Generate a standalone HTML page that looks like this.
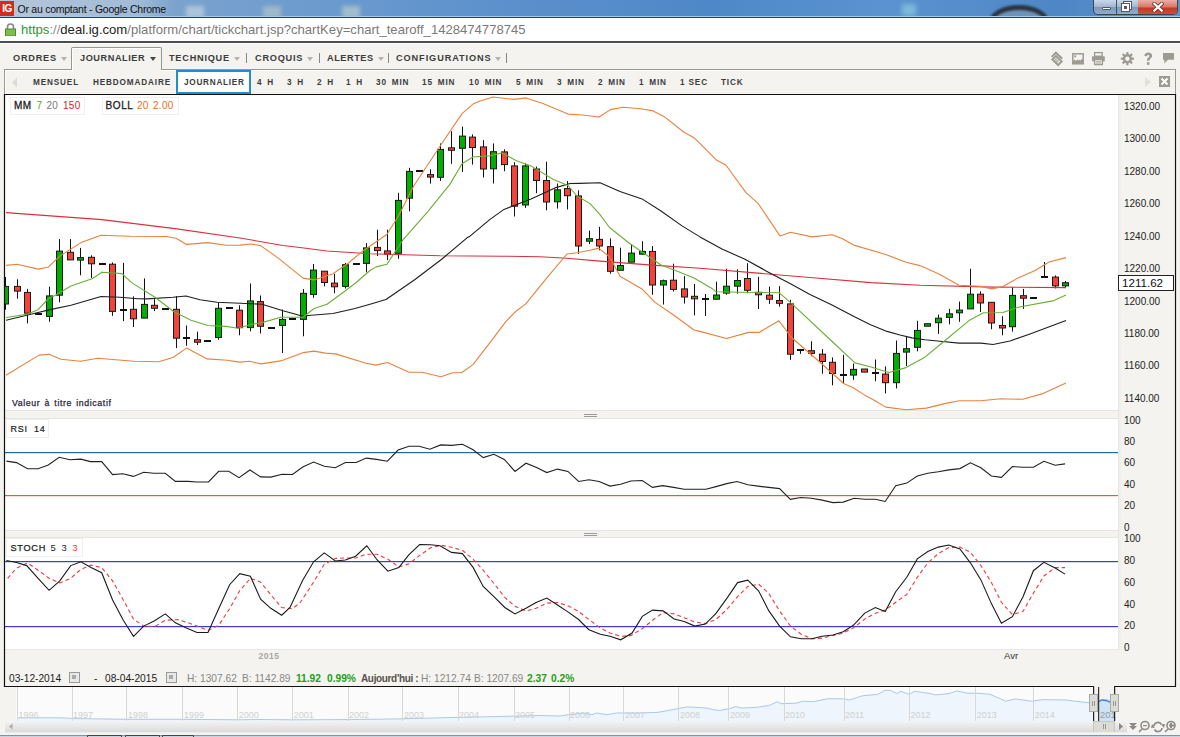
<!DOCTYPE html>
<html><head><meta charset="utf-8">
<style>
*{margin:0;padding:0;box-sizing:border-box}
html,body{width:1180px;height:737px;overflow:hidden;background:#f4f3ef;font-family:"Liberation Sans",sans-serif;position:relative}
.a{position:absolute;white-space:nowrap}
#title{left:0;top:0;width:1180px;height:18px;background:linear-gradient(90deg,#9fb6cf 0%,#7ea4cc 12%,#6e9ccf 25%,#5a8fcb 45%,#4f88c8 60%,#5a93cf 75%,#4f87c6 90%,#5d93cb 100%)}
#title .t{left:17.5px;top:3px;font-size:10.5px;color:#111;letter-spacing:-0.25px}
#logo{left:0;top:1px;width:14px;height:15px;background:#d52a22;color:#fff;font-weight:bold;font-size:10px;line-height:15px;text-align:center;letter-spacing:-0.5px}
#tline{left:0;top:16px;width:1180px;height:3px;background:linear-gradient(#a8c8ec 0,#a8c8ec 33%,#2e3d52 33%,#2e3d52 67%,#e4e6e8 67%)}
#addr{left:0;top:18px;width:1180px;height:23px;background:#fff}
#url{left:21px;top:22px;font-size:13.1px;color:#7a7a7a;letter-spacing:0}
#aline{left:0;top:41px;width:1180px;height:3px;background:linear-gradient(#4a4d52 0,#4a4d52 67%,#fdfdfc 67%)}
.tb{font-size:9.2px;font-weight:bold;color:#3c3c3c;letter-spacing:0.75px}
.arr{width:0;height:0;border-left:3px solid transparent;border-right:3px solid transparent;border-top:4px solid #b5b3ab}
.sep{width:1px;height:10px;background:#888}
.st{font-size:8.2px;font-weight:bold;color:#3c3c3c;letter-spacing:0.85px;top:78px;word-spacing:1.8px}
.ax{font-size:10px;color:#222;left:1124px}
.lbl{font-size:9.5px;font-weight:bold;color:#333;letter-spacing:0.7px}
.box{border:1px solid #f0efeb;background:#fff}
.bt{font-size:10.2px;top:672.5px}
</style></head><body>
<div id="title" class="a">
 <div class="a" style="left:186px;top:6px;width:18px;height:12px;background:#b9cde0;filter:blur(2px);opacity:.8"></div>
 <div class="a" style="left:263px;top:6px;width:18px;height:12px;background:#a9c0c8;filter:blur(2px);opacity:.8"></div>
 <div class="a" style="left:342px;top:6px;width:18px;height:12px;background:#b0c6cc;filter:blur(2px);opacity:.8"></div>
 <div class="a" style="left:902px;top:4px;width:14px;height:12px;background:#8ccbe0;filter:blur(2.5px);opacity:.7"></div>
 <div class="a" style="left:989px;top:5px;width:60px;height:34px;border-radius:50%;border:5px solid #2b3440;background:#6e93b8;filter:blur(1.2px)"></div>
 <div class="a" style="left:0;top:0;width:175px;height:17px;background:linear-gradient(90deg,rgba(200,212,226,.55),rgba(200,212,226,.45) 80%,rgba(200,212,226,0));"></div>
 <div id="logo" class="a">IG</div>
 <div class="a t">Or au comptant - Google Chrome</div>
 <div class="a" style="left:1093px;top:0;width:85px;height:15px;border:1px solid #3a4656;border-top:none;border-radius:0 0 5px 5px;background:linear-gradient(#c9d8e8,#9fb6d0 50%,#7e9ab9 52%,#90acc8);overflow:hidden">
   <div class="a" style="left:22px;top:0;width:1px;height:15px;background:#44505e"></div>
   <div class="a" style="left:44px;top:0;width:40px;height:15px;background:linear-gradient(#eab0a6,#d77868 45%,#c23a22 55%,#d05040)"></div>
   <div class="a" style="left:8px;top:7px;width:9px;height:3px;background:#fff;border:1px solid #556;border-radius:1px"></div>
   <div class="a" style="left:30px;top:2px;width:7px;height:7px;border:1.5px solid #fff;outline:1px solid #556"></div>
   <div class="a" style="left:28px;top:4px;width:7px;height:7px;border:2px solid #fff;background:#556;outline:1px solid #556"></div>
   <svg class="a" style="left:58px;top:2px" width="12" height="10"><path d="M2.3,1.8 L9.7,8.6 M9.7,1.8 L2.3,8.6" stroke="#6a3028" stroke-width="3.8" stroke-linecap="square"/><path d="M2.3,1.8 L9.7,8.6 M9.7,1.8 L2.3,8.6" stroke="#fff" stroke-width="2.2" stroke-linecap="square"/></svg>
 </div>
</div>
<div id="tline" class="a"></div>
<div id="addr" class="a"></div>
<svg class="a" style="left:5px;top:23px" width="11" height="13"><path d="M2.5,6 V4 A3,3 0 0 1 8.5,4 V6" fill="none" stroke="#888" stroke-width="1.6"/><rect x="0.5" y="6" width="10" height="7" fill="#7cc04a" stroke="#4e8a2a"/></svg>
<div id="url" class="a"><span style="color:#1e9a3a">https</span><span style="color:#8a8a8a">://</span><span style="color:#222">deal.ig.com</span>/platform/chart/tickchart.jsp?chartKey=chart_tearoff_1428474778745</div>
<div id="aline" class="a"></div>

<!-- toolbar -->
<div class="a" style="left:71px;top:47px;width:91px;height:24px;border:1px solid #949a8e;border-bottom:none;background:#f4f3ef;border-radius:2px 2px 0 0;box-shadow:inset 1px 1px 0 #fff"></div>
<div class="a" style="left:4px;top:69px;width:1172px;height:26px;border:1px solid #949a8e;border-bottom:none;background:#f4f3ef;box-shadow:inset 1px 1px 0 #fff"></div>
<div class="a" style="left:72px;top:68px;width:89px;height:3px;background:#f4f3ef;border-left:1px solid #fff"></div>
<div class="a tb" style="left:13px;top:53px">ORDRES</div><div class="a arr" style="left:61px;top:57px"></div>
<div class="a tb" style="left:80px;top:53px;letter-spacing:0.55px">JOURNALIER</div><div class="a arr" style="left:150px;top:57px;border-top-color:#444"></div>
<div class="a tb" style="left:169px;top:53px">TECHNIQUE</div><div class="a arr" style="left:234px;top:57px"></div><div class="a sep" style="left:246px;top:53px"></div>
<div class="a tb" style="left:255px;top:53px">CROQUIS</div><div class="a arr" style="left:307px;top:57px"></div><div class="a sep" style="left:319px;top:53px"></div>
<div class="a tb" style="left:327px;top:53px;letter-spacing:0.55px">ALERTES</div><div class="a arr" style="left:378px;top:57px"></div><div class="a sep" style="left:388px;top:53px"></div>
<div class="a tb" style="left:396px;top:53px;letter-spacing:0.9px">CONFIGURATIONS</div><div class="a arr" style="left:495px;top:57px"></div><div class="a sep" style="left:506px;top:53px"></div>

<!-- toolbar icons -->
<svg class="a" style="left:1040px;top:45px" width="140" height="25" viewBox="1040 45 140 25">
 <g fill="#9d9a92" stroke="none">
  <path d="M1051,56.2 L1055.9,51.3 L1062.9,58 L1061.5,59.4 L1055.9,54.1 L1052.4,57.6 Z"/>
  <path d="M1051,59.4 L1055.9,54.6 L1063,61.6 L1058.2,66.4 Z M1053.6,59.4 L1055.9,57.2 L1060.4,61.6 L1058.2,63.8 Z" fill-rule="evenodd"/>
 </g>
 <g stroke="#9d9a92" stroke-width="0.9" fill="none"><path d="M1054.6,58.2 L1059.1,62.7 M1053.6,59.4 L1058.2,63.8 M1057.3,58.1 L1054.8,60.6 M1058.8,59.6 L1056.3,62.1"/></g>
 <rect x="1072.8" y="53.8" width="10.4" height="10" fill="none" stroke="#9d9a92" stroke-width="1.5"/>
 <circle cx="1075.2" cy="56.3" r="1.1" fill="#9d9a92"/>
 <path d="M1072.8,63.8 V61.6 L1074.6,59.6 L1076,61 L1077.2,59.4 L1078.4,60.6 L1079.5,59.8 L1080.8,60.4 L1081.8,58.8 L1083.2,60 V63.8 Z" fill="#9d9a92"/>
 <rect x="1094.6" y="52.6" width="7.6" height="3.6" fill="none" stroke="#9d9a92" stroke-width="1.3"/>
 <rect x="1092" y="56.2" width="12.8" height="5.2" rx="0.8" fill="#9d9a92"/>
 <rect x="1094.6" y="59.4" width="7.8" height="5.2" fill="#f4f3ef" stroke="#9d9a92" stroke-width="1.3"/>
 <rect x="1095.8" y="60.8" width="5.4" height="0.9" fill="#9d9a92"/><rect x="1095.8" y="62.6" width="5.4" height="0.9" fill="#9d9a92"/>
 <g transform="translate(1127.4,58.7)" fill="#9d9a92">
  <circle r="4.6"/>
  <g id="tooth"><rect x="-1.1" y="-6.6" width="2.2" height="3"/></g>
  <use href="#tooth" transform="rotate(45)"/><use href="#tooth" transform="rotate(90)"/><use href="#tooth" transform="rotate(135)"/>
  <use href="#tooth" transform="rotate(180)"/><use href="#tooth" transform="rotate(225)"/><use href="#tooth" transform="rotate(270)"/><use href="#tooth" transform="rotate(315)"/>
  <circle r="2.2" fill="#f4f3ef"/>
 </g>
 <path d="M1144.4,56 C1144.4,53.6 1146.2,52.4 1148.2,52.4 C1150.6,52.4 1152.2,53.8 1152.2,55.8 C1152.2,58.2 1149.4,58.6 1149.4,60.8 H1146.9 C1146.9,57.8 1149.4,57.4 1149.4,56 C1149.4,55.2 1148.9,54.9 1148.2,54.9 C1147.4,54.9 1147,55.4 1147,56.2 Z" fill="#9d9a92"/>
 <rect x="1146.9" y="62.2" width="2.6" height="2.6" fill="#9d9a92"/>
 <path d="M1163,53.1 H1174 V59.8 H1168 L1164.3,63.4 V59.8 H1163 Z" fill="#9d9a92"/>
</svg>

<!-- sub tabs -->
<svg class="a" style="left:11px;top:77px" width="8" height="11"><polygon points="6,0.5 6,10.5 1,5.5" fill="#dcdcd6"/></svg>
<div class="a st" style="left:33px">MENSUEL</div>
<div class="a st" style="left:93px">HEBDOMADAIRE</div>
<div class="a" style="left:176px;top:70px;width:75px;height:24px;border:2px solid #1e8fd0;background:#fff"></div>
<div class="a st" style="left:184px;letter-spacing:0.75px">JOURNALIER</div>
<div class="a st" style="left:257px">4 H</div>
<div class="a st" style="left:287px">3 H</div>
<div class="a st" style="left:317px">2 H</div>
<div class="a st" style="left:346px">1 H</div>
<div class="a st" style="left:376px">30 MIN</div>
<div class="a st" style="left:422px">15 MIN</div>
<div class="a st" style="left:469px">10 MIN</div>
<div class="a st" style="left:516px">5 MIN</div>
<div class="a st" style="left:557px">3 MIN</div>
<div class="a st" style="left:598px">2 MIN</div>
<div class="a st" style="left:639px">1 MIN</div>
<div class="a st" style="left:680px;word-spacing:0">1 SEC</div>
<div class="a st" style="left:721px">TICK</div>
<svg class="a" style="left:1144px;top:76px" width="8" height="12"><polygon points="1,1 7,6 1,11" fill="#e2e1dc"/></svg>
<svg class="a" style="left:1159px;top:76px" width="11" height="11"><rect width="11" height="11" fill="#9d9b93"/><path d="M2.5,2.5 L8.5,8.5 M8.5,2.5 L2.5,8.5" stroke="#fff" stroke-width="2"/></svg>


<svg width="1180" height="737" style="position:absolute;left:0;top:0">
 <!-- panels -->
 <rect x="5" y="95" width="1113" height="315" fill="#fff"/>
 <rect x="5" y="419" width="1113" height="111" fill="#fff"/>
 <rect x="5" y="538" width="1113" height="111" fill="#fff"/>
 <!-- divider lines -->
 <rect x="5" y="410" width="1113" height="1" fill="#e4e4e2"/>
 <rect x="5" y="418" width="1113" height="1" fill="#e4e4e2"/>
 <rect x="5" y="530" width="1113" height="1" fill="#e4e4e2"/>
 <rect x="5" y="537" width="1113" height="1" fill="#e4e4e2"/>
 <rect x="1118" y="95" width="1" height="555" fill="#e6e6e4"/><rect x="1119" y="95" width="2" height="555" fill="#efefec"/><rect x="1174" y="95" width="1" height="591" fill="#fbfbf9"/>
 <rect x="5" y="649" width="1113" height="1" fill="#e8e8e6"/>
 <!-- handles -->
 <g fill="#9a9a9a">
  <rect x="584" y="414" width="13" height="1"/><rect x="584" y="416" width="13" height="1"/>
  <rect x="584" y="533" width="13" height="1"/><rect x="584" y="535" width="13" height="1"/>
 </g>
 <defs><clipPath id="cc"><rect x="5" y="95" width="1113" height="315"/></clipPath></defs>
 <g clip-path="url(#cc)"><rect x="5" y="277.0" width="1" height="32.7" fill="#111"/>
<rect x="2.5" y="286.4" width="6" height="17.6" fill="#00ad00" stroke="#1a1a1a" stroke-width="1"/>
<rect x="17" y="279.3" width="1" height="19.4" fill="#111"/>
<rect x="14.5" y="286.4" width="6" height="4.7" fill="#f2433a" stroke="#1a1a1a" stroke-width="1"/>
<rect x="27" y="288.9" width="1" height="34.5" fill="#111"/>
<rect x="24.5" y="292.4" width="6" height="20.8" fill="#f2433a" stroke="#1a1a1a" stroke-width="1"/>
<rect x="35" y="313" width="7" height="2" fill="#111"/>
<rect x="49" y="286.7" width="1" height="35.0" fill="#111"/>
<rect x="46.5" y="295.9" width="6" height="20.5" fill="#00ad00" stroke="#1a1a1a" stroke-width="1"/>
<rect x="59" y="239.1" width="1" height="63.2" fill="#111"/>
<rect x="56.5" y="251.1" width="6" height="44.1" fill="#00ad00" stroke="#1a1a1a" stroke-width="1"/>
<rect x="70" y="239.1" width="1" height="20.8" fill="#111"/>
<rect x="67.5" y="252.3" width="6" height="7.6" fill="#f2433a" stroke="#1a1a1a" stroke-width="1"/>
<rect x="80" y="247.9" width="1" height="27.4" fill="#111"/>
<rect x="77.5" y="257.6" width="6" height="2.5" fill="#00ad00" stroke="#1a1a1a" stroke-width="1"/>
<rect x="91" y="255.3" width="1" height="22.6" fill="#111"/>
<rect x="88.5" y="257.3" width="6" height="6.5" fill="#f2433a" stroke="#1a1a1a" stroke-width="1"/>
<rect x="99" y="263" width="7" height="2" fill="#111"/>
<rect x="112" y="262.4" width="1" height="53.4" fill="#111"/>
<rect x="109.5" y="264.2" width="6" height="47.2" fill="#f2433a" stroke="#1a1a1a" stroke-width="1"/>
<rect x="123" y="262.9" width="1" height="58.2" fill="#111"/>
<rect x="120" y="309" width="7" height="2" fill="#111"/>
<rect x="133" y="296.4" width="1" height="30.6" fill="#111"/>
<rect x="130.5" y="309.3" width="6" height="9.5" fill="#f2433a" stroke="#1a1a1a" stroke-width="1"/>
<rect x="144" y="278.4" width="1" height="39.7" fill="#111"/>
<rect x="141.5" y="304.4" width="6" height="13.7" fill="#00ad00" stroke="#1a1a1a" stroke-width="1"/>
<rect x="154" y="299.1" width="1" height="12.0" fill="#111"/>
<rect x="151.5" y="305.3" width="6" height="3.0" fill="#f2433a" stroke="#1a1a1a" stroke-width="1"/>
<rect x="162" y="308" width="7" height="2" fill="#111"/>
<rect x="176" y="296.1" width="1" height="52.0" fill="#111"/>
<rect x="173.5" y="309.3" width="6" height="28.9" fill="#f2433a" stroke="#1a1a1a" stroke-width="1"/>
<rect x="186" y="325.5" width="1" height="20.3" fill="#111"/>
<rect x="183" y="337" width="7" height="2" fill="#111"/>
<rect x="197" y="331.7" width="1" height="13.3" fill="#111"/>
<rect x="194.5" y="339.7" width="6" height="2.5" fill="#f2433a" stroke="#1a1a1a" stroke-width="1"/>
<rect x="204" y="340" width="7" height="2" fill="#111"/>
<rect x="218" y="302.6" width="1" height="37.1" fill="#111"/>
<rect x="215.5" y="308.3" width="6" height="29.2" fill="#00ad00" stroke="#1a1a1a" stroke-width="1"/>
<rect x="226" y="307" width="7" height="2" fill="#111"/>
<rect x="239" y="305.3" width="1" height="29.9" fill="#111"/>
<rect x="236.5" y="310.2" width="6" height="17.5" fill="#f2433a" stroke="#1a1a1a" stroke-width="1"/>
<rect x="250" y="283.5" width="1" height="47.8" fill="#111"/>
<rect x="247.5" y="300.9" width="6" height="26.7" fill="#00ad00" stroke="#1a1a1a" stroke-width="1"/>
<rect x="260" y="295.5" width="1" height="38.0" fill="#111"/>
<rect x="257.5" y="301.6" width="6" height="24.7" fill="#f2433a" stroke="#1a1a1a" stroke-width="1"/>
<rect x="268" y="327" width="7" height="2" fill="#111"/>
<rect x="282" y="309.6" width="1" height="43.4" fill="#111"/>
<rect x="279.5" y="319.4" width="6" height="6.0" fill="#00ad00" stroke="#1a1a1a" stroke-width="1"/>
<rect x="289" y="318" width="7" height="2" fill="#111"/>
<rect x="303" y="289.0" width="1" height="47.3" fill="#111"/>
<rect x="300.5" y="293.3" width="6" height="26.1" fill="#00ad00" stroke="#1a1a1a" stroke-width="1"/>
<rect x="313" y="264.0" width="1" height="33.7" fill="#111"/>
<rect x="310.5" y="270.1" width="6" height="24.3" fill="#00ad00" stroke="#1a1a1a" stroke-width="1"/>
<rect x="324" y="271.2" width="1" height="15.2" fill="#111"/>
<rect x="321.5" y="271.2" width="6" height="11.3" fill="#f2433a" stroke="#1a1a1a" stroke-width="1"/>
<rect x="334" y="273.8" width="1" height="19.5" fill="#111"/>
<rect x="331.5" y="283.1" width="6" height="3.7" fill="#f2433a" stroke="#1a1a1a" stroke-width="1"/>
<rect x="345" y="262.9" width="1" height="25.6" fill="#111"/>
<rect x="342.5" y="264.7" width="6" height="21.7" fill="#00ad00" stroke="#1a1a1a" stroke-width="1"/>
<rect x="353" y="263" width="7" height="2" fill="#111"/>
<rect x="366" y="243.0" width="1" height="29.3" fill="#111"/>
<rect x="363.5" y="247.9" width="6" height="15.5" fill="#00ad00" stroke="#1a1a1a" stroke-width="1"/>
<rect x="377" y="229.7" width="1" height="26.3" fill="#111"/>
<rect x="374.5" y="247.4" width="6" height="3.2" fill="#f2433a" stroke="#1a1a1a" stroke-width="1"/>
<rect x="387" y="229.7" width="1" height="30.4" fill="#111"/>
<rect x="384.5" y="250.9" width="6" height="3.2" fill="#f2433a" stroke="#1a1a1a" stroke-width="1"/>
<rect x="398" y="192.8" width="1" height="66.0" fill="#111"/>
<rect x="395.5" y="200.4" width="6" height="52.9" fill="#00ad00" stroke="#1a1a1a" stroke-width="1"/>
<rect x="409" y="167.8" width="1" height="43.5" fill="#111"/>
<rect x="406.5" y="171.4" width="6" height="26.8" fill="#00ad00" stroke="#1a1a1a" stroke-width="1"/>
<rect x="416" y="170" width="7" height="2" fill="#111"/>
<rect x="430" y="169.2" width="1" height="14.4" fill="#111"/>
<rect x="427.5" y="174.6" width="6" height="2.5" fill="#f2433a" stroke="#1a1a1a" stroke-width="1"/>
<rect x="440" y="143.4" width="1" height="37.5" fill="#111"/>
<rect x="437.5" y="149.4" width="6" height="27.9" fill="#00ad00" stroke="#1a1a1a" stroke-width="1"/>
<rect x="451" y="131.2" width="1" height="32.6" fill="#111"/>
<rect x="448.5" y="147.8" width="6" height="2.5" fill="#f2433a" stroke="#1a1a1a" stroke-width="1"/>
<rect x="462" y="126.6" width="1" height="45.3" fill="#111"/>
<rect x="459.5" y="136.1" width="6" height="12.2" fill="#00ad00" stroke="#1a1a1a" stroke-width="1"/>
<rect x="472" y="134.4" width="1" height="30.2" fill="#111"/>
<rect x="469.5" y="137.1" width="6" height="10.4" fill="#f2433a" stroke="#1a1a1a" stroke-width="1"/>
<rect x="483" y="140.2" width="1" height="37.3" fill="#111"/>
<rect x="480.5" y="146.9" width="6" height="22.1" fill="#f2433a" stroke="#1a1a1a" stroke-width="1"/>
<rect x="493" y="143.4" width="1" height="40.1" fill="#111"/>
<rect x="490.5" y="151.7" width="6" height="17.1" fill="#00ad00" stroke="#1a1a1a" stroke-width="1"/>
<rect x="504" y="149.3" width="1" height="21.9" fill="#111"/>
<rect x="501.5" y="151.9" width="6" height="12.7" fill="#f2433a" stroke="#1a1a1a" stroke-width="1"/>
<rect x="514" y="162.2" width="1" height="54.3" fill="#111"/>
<rect x="511.5" y="165.9" width="6" height="40.3" fill="#f2433a" stroke="#1a1a1a" stroke-width="1"/>
<rect x="525" y="163.4" width="1" height="44.5" fill="#111"/>
<rect x="522.5" y="165.9" width="6" height="39.1" fill="#00ad00" stroke="#1a1a1a" stroke-width="1"/>
<rect x="536" y="166.6" width="1" height="26.6" fill="#111"/>
<rect x="533.5" y="169.0" width="6" height="11.5" fill="#f2433a" stroke="#1a1a1a" stroke-width="1"/>
<rect x="546" y="161.7" width="1" height="48.6" fill="#111"/>
<rect x="543.5" y="180.5" width="6" height="21.5" fill="#f2433a" stroke="#1a1a1a" stroke-width="1"/>
<rect x="557" y="183.5" width="1" height="25.1" fill="#111"/>
<rect x="554.5" y="189.8" width="6" height="12.0" fill="#00ad00" stroke="#1a1a1a" stroke-width="1"/>
<rect x="567" y="181.0" width="1" height="28.4" fill="#111"/>
<rect x="564.5" y="188.6" width="6" height="7.1" fill="#f2433a" stroke="#1a1a1a" stroke-width="1"/>
<rect x="578" y="190.3" width="1" height="63.5" fill="#111"/>
<rect x="575.5" y="195.9" width="6" height="50.1" fill="#f2433a" stroke="#1a1a1a" stroke-width="1"/>
<rect x="589" y="230.6" width="1" height="13.4" fill="#111"/>
<rect x="586.5" y="238.7" width="6" height="2.5" fill="#00ad00" stroke="#1a1a1a" stroke-width="1"/>
<rect x="599" y="226.9" width="1" height="23.4" fill="#111"/>
<rect x="596.5" y="239.4" width="6" height="6.6" fill="#f2433a" stroke="#1a1a1a" stroke-width="1"/>
<rect x="610" y="238.4" width="1" height="35.3" fill="#111"/>
<rect x="607.5" y="246.6" width="6" height="24.7" fill="#f2433a" stroke="#1a1a1a" stroke-width="1"/>
<rect x="620" y="247.7" width="1" height="22.6" fill="#111"/>
<rect x="617.5" y="265.5" width="6" height="4.8" fill="#00ad00" stroke="#1a1a1a" stroke-width="1"/>
<rect x="631" y="244.2" width="1" height="18.0" fill="#111"/>
<rect x="628.5" y="253.1" width="6" height="9.1" fill="#00ad00" stroke="#1a1a1a" stroke-width="1"/>
<rect x="642" y="241.2" width="1" height="13.4" fill="#111"/>
<rect x="639.5" y="251.4" width="6" height="2.8" fill="#00ad00" stroke="#1a1a1a" stroke-width="1"/>
<rect x="652" y="246.0" width="1" height="48.8" fill="#111"/>
<rect x="649.5" y="251.4" width="6" height="33.6" fill="#f2433a" stroke="#1a1a1a" stroke-width="1"/>
<rect x="663" y="279.6" width="1" height="24.9" fill="#111"/>
<rect x="660.5" y="280.7" width="6" height="4.3" fill="#00ad00" stroke="#1a1a1a" stroke-width="1"/>
<rect x="673" y="263.7" width="1" height="27.8" fill="#111"/>
<rect x="670.5" y="280.2" width="6" height="9.2" fill="#f2433a" stroke="#1a1a1a" stroke-width="1"/>
<rect x="684" y="275.9" width="1" height="27.6" fill="#111"/>
<rect x="681.5" y="288.9" width="6" height="8.1" fill="#f2433a" stroke="#1a1a1a" stroke-width="1"/>
<rect x="694" y="283.9" width="1" height="31.5" fill="#111"/>
<rect x="691.5" y="296.3" width="6" height="2.5" fill="#f2433a" stroke="#1a1a1a" stroke-width="1"/>
<rect x="705" y="294.0" width="1" height="22.0" fill="#111"/>
<rect x="702" y="298" width="7" height="2" fill="#111"/>
<rect x="716" y="281.6" width="1" height="17.6" fill="#111"/>
<rect x="713.5" y="295.0" width="6" height="4.2" fill="#00ad00" stroke="#1a1a1a" stroke-width="1"/>
<rect x="726" y="268.7" width="1" height="26.1" fill="#111"/>
<rect x="723.5" y="286.2" width="6" height="6.9" fill="#00ad00" stroke="#1a1a1a" stroke-width="1"/>
<rect x="737" y="269.3" width="1" height="24.4" fill="#111"/>
<rect x="734.5" y="280.5" width="6" height="5.7" fill="#00ad00" stroke="#1a1a1a" stroke-width="1"/>
<rect x="747" y="263.2" width="1" height="29.9" fill="#111"/>
<rect x="744.5" y="278.5" width="6" height="11.8" fill="#f2433a" stroke="#1a1a1a" stroke-width="1"/>
<rect x="758" y="276.9" width="1" height="32.1" fill="#111"/>
<rect x="755.5" y="292.3" width="6" height="2.5" fill="#f2433a" stroke="#1a1a1a" stroke-width="1"/>
<rect x="769" y="286.6" width="1" height="17.3" fill="#111"/>
<rect x="766.5" y="295.2" width="6" height="4.0" fill="#f2433a" stroke="#1a1a1a" stroke-width="1"/>
<rect x="779" y="286.2" width="1" height="20.4" fill="#111"/>
<rect x="776.5" y="300.5" width="6" height="2.8" fill="#f2433a" stroke="#1a1a1a" stroke-width="1"/>
<rect x="790" y="299.8" width="1" height="60.1" fill="#111"/>
<rect x="787.5" y="303.9" width="6" height="50.3" fill="#f2433a" stroke="#1a1a1a" stroke-width="1"/>
<rect x="800" y="350.0" width="1" height="3.8" fill="#111"/>
<rect x="797" y="349" width="7" height="2" fill="#111"/>
<rect x="811" y="341.2" width="1" height="15.0" fill="#111"/>
<rect x="808.5" y="350.7" width="6" height="2.7" fill="#f2433a" stroke="#1a1a1a" stroke-width="1"/>
<rect x="822" y="349.1" width="1" height="24.6" fill="#111"/>
<rect x="819.5" y="354.2" width="6" height="7.3" fill="#f2433a" stroke="#1a1a1a" stroke-width="1"/>
<rect x="832" y="357.4" width="1" height="27.9" fill="#111"/>
<rect x="829.5" y="362.3" width="6" height="11.2" fill="#f2433a" stroke="#1a1a1a" stroke-width="1"/>
<rect x="843" y="354.8" width="1" height="29.1" fill="#111"/>
<rect x="840" y="374" width="7" height="2" fill="#111"/>
<rect x="853" y="363.5" width="1" height="16.3" fill="#111"/>
<rect x="850.5" y="369.4" width="6" height="5.7" fill="#00ad00" stroke="#1a1a1a" stroke-width="1"/>
<rect x="864" y="369.0" width="1" height="3.1" fill="#111"/>
<rect x="861.5" y="369.0" width="6" height="3.1" fill="#f2433a" stroke="#1a1a1a" stroke-width="1"/>
<rect x="875" y="359.5" width="1" height="21.7" fill="#111"/>
<rect x="872" y="372" width="7" height="2" fill="#111"/>
<rect x="885" y="366.4" width="1" height="27.0" fill="#111"/>
<rect x="882.5" y="374.1" width="6" height="8.6" fill="#f2433a" stroke="#1a1a1a" stroke-width="1"/>
<rect x="896" y="340.5" width="1" height="47.9" fill="#111"/>
<rect x="893.5" y="353.4" width="6" height="29.3" fill="#00ad00" stroke="#1a1a1a" stroke-width="1"/>
<rect x="906" y="336.5" width="1" height="29.5" fill="#111"/>
<rect x="903.5" y="348.7" width="6" height="3.4" fill="#00ad00" stroke="#1a1a1a" stroke-width="1"/>
<rect x="917" y="320.8" width="1" height="30.5" fill="#111"/>
<rect x="914.5" y="330.4" width="6" height="16.9" fill="#00ad00" stroke="#1a1a1a" stroke-width="1"/>
<rect x="927" y="323.7" width="1" height="2.4" fill="#111"/>
<rect x="924.5" y="323.7" width="6" height="2.5" fill="#00ad00" stroke="#1a1a1a" stroke-width="1"/>
<rect x="938" y="314.6" width="1" height="19.3" fill="#111"/>
<rect x="935.5" y="318.2" width="6" height="4.5" fill="#00ad00" stroke="#1a1a1a" stroke-width="1"/>
<rect x="949" y="308.9" width="1" height="15.4" fill="#111"/>
<rect x="946.5" y="313.8" width="6" height="3.6" fill="#00ad00" stroke="#1a1a1a" stroke-width="1"/>
<rect x="959" y="301.6" width="1" height="20.2" fill="#111"/>
<rect x="956.5" y="310.1" width="6" height="2.7" fill="#00ad00" stroke="#1a1a1a" stroke-width="1"/>
<rect x="970" y="268.8" width="1" height="40.1" fill="#111"/>
<rect x="967.5" y="294.2" width="6" height="14.7" fill="#00ad00" stroke="#1a1a1a" stroke-width="1"/>
<rect x="980" y="291.3" width="1" height="20.8" fill="#111"/>
<rect x="977.5" y="294.2" width="6" height="8.8" fill="#f2433a" stroke="#1a1a1a" stroke-width="1"/>
<rect x="991" y="302.3" width="1" height="26.9" fill="#111"/>
<rect x="988.5" y="302.3" width="6" height="20.7" fill="#f2433a" stroke="#1a1a1a" stroke-width="1"/>
<rect x="1002" y="316.2" width="1" height="19.1" fill="#111"/>
<rect x="999.5" y="325.5" width="6" height="2.5" fill="#f2433a" stroke="#1a1a1a" stroke-width="1"/>
<rect x="1012" y="287.1" width="1" height="44.5" fill="#111"/>
<rect x="1009.5" y="295.4" width="6" height="31.3" fill="#00ad00" stroke="#1a1a1a" stroke-width="1"/>
<rect x="1023" y="288.9" width="1" height="20.0" fill="#111"/>
<rect x="1020.5" y="295.7" width="6" height="2.5" fill="#f2433a" stroke="#1a1a1a" stroke-width="1"/>
<rect x="1030" y="297" width="7" height="2" fill="#111"/>
<rect x="1044" y="262.0" width="1" height="14.6" fill="#111"/>
<rect x="1041" y="276" width="7" height="2" fill="#111"/>
<rect x="1055" y="275.4" width="1" height="13.0" fill="#111"/>
<rect x="1052.5" y="277.1" width="6" height="8.8" fill="#f2433a" stroke="#1a1a1a" stroke-width="1"/>
<rect x="1065" y="281.0" width="1" height="6.6" fill="#111"/>
<rect x="1062.5" y="282.7" width="6" height="3.2" fill="#00ad00" stroke="#1a1a1a" stroke-width="1"/></g>
 <!-- lines main -->
 <g fill="none" stroke-width="1.1" stroke-linejoin="round">
  <polyline points="6.0,212.6 102.0,219.6 175.0,228.6 240.0,238.0 283.0,245.5 300.0,247.5 327.0,251.0 370.0,253.8 440.0,255.8 503.0,256.2 540.0,256.7 567.0,258.3 600.0,261.1 652.0,265.1 700.0,268.3 761.0,273.4 810.0,277.5 871.0,282.6 920.0,285.2 993.0,287.1 1066.0,287.6" stroke="#d9303c"/>
  <polyline points="6.0,265.4 17.0,264.2 38.0,269.1 48.0,267.3 60.0,255.9 81.0,242.6 101.0,235.2 130.0,236.2 166.0,236.5 176.0,238.2 186.7,244.4 208.0,242.6 226.0,245.3 240.0,245.1 251.0,244.0 260.6,245.6 279.0,258.6 303.0,278.1 313.8,279.9 333.0,273.8 348.5,263.0 361.5,252.0 387.0,234.3 398.0,216.7 414.0,185.5 441.0,144.8 462.0,113.6 473.0,104.1 480.0,101.1 493.0,97.0 514.0,99.4 526.0,97.9 543.0,103.6 568.0,114.1 580.0,114.8 599.0,117.0 610.5,109.6 622.7,107.2 641.0,108.7 653.0,110.9 664.0,116.4 684.0,132.2 694.0,137.7 716.0,159.7 726.0,165.2 746.0,192.6 758.0,203.3 780.0,235.9 790.5,232.3 812.0,236.9 832.0,234.7 842.0,238.4 854.6,245.4 885.0,254.2 906.0,262.2 920.0,265.6 939.5,274.2 959.0,285.2 981.0,286.4 992.0,288.9 1003.0,286.4 1018.0,277.9 1035.0,270.5 1049.0,262.0 1066.0,257.6" stroke="#e8823c"/>
  <polyline points="6.0,375.3 39.0,355.1 49.0,354.3 61.0,359.2 80.6,361.2 97.7,358.2 134.0,361.2 158.7,361.7 173.0,357.5 186.5,348.1 207.3,358.9 227.4,360.3 239.3,362.1 250.0,361.3 260.7,363.9 280.8,360.9 303.4,352.6 314.0,351.1 325.4,353.1 335.6,353.9 366.0,363.3 376.0,365.1 387.7,362.5 409.0,372.2 422.0,372.2 441.0,376.8 452.5,372.7 461.5,372.7 473.0,364.6 490.7,341.7 506.0,321.4 516.0,311.2 526.0,303.6 546.6,278.1 567.0,254.0 577.0,252.7 590.0,250.3 598.7,248.1 609.5,256.8 620.0,276.3 642.0,288.9 655.0,302.4 672.5,314.3 694.0,330.0 700.0,331.4 726.4,338.5 748.8,332.4 759.0,332.4 779.0,320.8 791.5,337.5 822.0,364.0 843.6,383.5 853.2,387.8 864.4,394.9 874.6,400.5 885.8,407.1 906.1,409.7 926.4,408.1 946.8,403.1 959.0,400.7 981.0,400.7 1000.6,398.8 1022.6,399.3 1042.0,393.9 1066.0,382.9" stroke="#e8823c"/>
  <polyline points="6.0,320.2 35.0,313.2 49.0,309.9 71.0,305.3 101.0,296.5 120.0,297.3 138.0,298.7 147.0,298.9 173.0,297.3 186.0,296.0 200.0,299.8 217.0,302.3 240.0,303.2 262.0,304.2 283.0,310.7 302.0,316.0 333.0,313.5 355.0,308.5 370.0,304.2 386.0,299.5 415.0,279.5 442.0,259.0 467.0,237.8 470.0,236.2 490.0,219.4 504.0,209.4 531.0,198.9 555.0,187.9 570.0,183.5 579.0,183.4 600.0,182.8 620.0,191.4 642.0,198.9 661.0,211.0 682.0,225.9 700.0,236.9 722.0,249.0 745.0,259.3 767.0,271.4 790.0,283.5 810.0,294.4 830.0,303.9 855.0,317.1 870.0,324.5 887.0,331.4 900.0,335.0 912.0,337.9 925.0,339.8 940.0,341.2 959.0,343.1 981.0,343.1 993.0,344.5 1010.0,341.0 1030.0,334.0 1066.0,320.6" stroke="#1e1e1e"/>
  <polyline points="6.0,317.5 27.0,314.2 38.0,309.7 49.0,298.0 53.0,296.4 71.0,286.0 92.0,278.8 102.0,272.2 122.0,273.6 130.0,281.1 134.0,284.1 155.0,297.3 174.0,311.8 191.0,320.3 208.0,325.5 226.0,326.4 238.0,328.2 250.0,324.7 262.0,322.6 281.0,317.2 303.0,317.2 314.0,308.5 327.0,304.2 342.0,293.3 355.0,283.5 370.0,270.5 376.0,266.9 387.0,264.2 403.0,239.8 428.0,211.3 450.0,184.1 462.0,163.8 473.0,157.0 485.0,156.1 490.0,155.8 502.0,152.9 516.0,160.5 531.0,165.9 553.0,179.3 568.0,185.5 577.0,196.0 590.0,203.6 600.0,214.7 609.5,227.5 629.0,243.0 645.0,254.0 661.0,265.0 678.0,271.6 694.0,278.0 712.0,288.4 716.0,291.8 741.0,292.3 779.0,292.7 792.0,303.9 830.0,339.5 855.0,362.9 871.0,367.0 889.0,372.5 906.0,367.6 924.0,357.8 942.0,343.0 969.0,320.6 983.5,312.8 1003.0,312.5 1018.0,307.2 1054.0,300.6 1066.0,295.0" stroke="#6aae36"/>
 </g>

 <!-- RSI -->
 <rect x="5" y="452" width="1113" height="1.2" fill="#1f6d96"/>
 <rect x="5" y="495" width="1113" height="1.2" fill="#f05050"/>
 <polyline points="6.4,461.1 16.5,462.6 27.5,468.7 38.1,468.7 48.3,464.9 59.2,457.3 69.9,459.8 80.9,459.1 90.3,461.6 101.7,461.6 112.6,474.6 122.8,473.8 133.5,476.4 143.7,472.3 153.8,473.3 165.3,473.3 175.4,481.4 188.2,481.4 197.0,482.0 208.5,482.0 218.7,471.3 228.8,471.3 239.0,477.6 249.9,470.0 260.6,476.9 270.8,477.1 282.2,474.3 292.5,474.5 302.7,467.0 313.6,462.0 324.3,466.3 335.3,467.8 345.4,462.5 356.1,462.5 366.3,458.1 376.4,459.4 387.4,461.2 398.1,450.0 409.0,446.2 419.2,446.2 429.8,449.2 440.8,444.9 451.5,445.4 462.4,444.2 473.1,449.7 483.2,457.6 493.9,454.3 504.3,459.4 515.0,471.4 526.0,463.2 536.6,467.5 546.8,472.6 557.5,469.1 567.9,471.4 578.6,481.5 588.9,479.8 599.1,481.5 610.0,486.1 620.7,484.3 630.9,481.0 642.3,480.5 652.5,487.4 662.6,485.6 673.6,487.4 684.2,489.2 695.2,489.2 705.9,489.2 716.0,486.6 726.7,483.6 737.1,481.5 747.8,484.8 758.0,486.1 768.7,487.4 779.6,488.6 790.3,499.3 800.7,497.5 811.4,498.3 822.1,500.1 833.0,502.6 843.2,502.1 854.1,498.3 864.8,499.3 875.3,499.3 885.2,501.5 895.7,485.7 906.8,483.1 917.3,476.0 927.8,473.3 938.3,471.8 948.8,469.9 959.9,468.6 970.4,462.8 980.9,467.8 991.4,476.0 1001.4,477.3 1012.4,466.5 1022.9,467.3 1033.4,467.3 1043.9,461.3 1055.2,465.2 1065.0,463.9" fill="none" stroke="#222" stroke-width="1.1"/>
 <!-- STOCH -->
 <rect x="5" y="561" width="1113" height="1.2" fill="#3b3bdc"/>
 <rect x="5" y="626" width="1113" height="1.2" fill="#3b3bdc"/>
 <polyline points="7.6,578.3 16.5,568.1 27.5,563.0 38.1,570.2 49.1,578.3 59.8,582.9 70.7,578.3 80.9,569.4 91.0,565.1 101.7,567.6 112.6,580.9 123.3,599.9 133.5,619.0 143.7,626.1 154.6,626.6 165.3,620.3 178.0,619.5 188.2,622.8 197.0,626.1 208.0,630.4 218.7,625.3 229.6,608.8 239.8,590.5 250.4,578.3 260.6,582.1 270.8,594.8 281.7,607.5 292.4,608.8 300.2,602.5 313.6,582.1 324.3,564.3 335.3,558.5 345.4,558.0 355.6,558.0 366.3,554.2 377.2,554.2 387.9,559.2 398.8,566.9 409.0,563.8 419.7,555.4 430.6,547.8 441.3,545.3 451.5,547.3 462.4,550.3 473.1,559.2 483.2,570.2 493.9,583.4 504.8,597.4 515.0,606.3 526.0,610.9 536.1,608.3 546.8,603.2 557.5,602.5 567.9,605.8 578.6,611.4 588.9,619.5 600.3,627.9 610.0,633.0 620.7,636.3 630.9,635.5 642.3,628.7 652.5,620.3 663.1,612.6 674.1,613.9 684.2,617.7 694.9,622.0 705.3,623.6 716.0,619.5 727.0,609.3 737.6,596.6 747.8,586.4 758.7,584.2 768.9,593.6 779.6,610.9 790.5,626.1 801.2,634.2 811.9,638.8 822.1,638.1 833.0,635.5 843.2,633.0 853.3,627.9 864.8,619.0 874.9,613.4 885.2,610.1 895.7,602.3 906.8,594.4 917.3,577.3 927.8,562.8 938.3,553.6 948.8,547.6 959.9,547.1 970.4,552.3 980.9,565.5 991.4,582.5 1001.4,602.3 1012.4,614.6 1022.9,611.5 1033.4,593.1 1043.9,576.0 1055.2,567.6 1065.0,567.6" fill="none" stroke="#f03a3a" stroke-width="1.1" stroke-dasharray="4,3"/>
 <polyline points="6.4,560.5 16.5,562.5 26.7,565.6 38.1,578.3 49.1,590.3 59.8,580.9 70.7,565.6 80.9,561.8 91.0,567.6 101.7,572.7 112.6,599.9 123.3,620.3 133.5,636.3 143.7,626.1 154.6,620.8 165.3,613.9 175.4,622.8 186.4,627.9 197.0,632.5 208.0,632.5 218.7,608.8 229.6,584.7 239.8,573.7 250.4,576.3 260.6,599.2 270.8,608.3 281.7,615.2 290.0,607.5 302.7,580.3 313.6,561.8 324.3,552.9 335.3,561.0 345.4,560.0 355.6,556.2 366.8,545.8 377.2,560.0 387.9,571.2 398.8,567.6 409.0,554.7 419.7,544.5 430.6,544.7 440.0,545.8 451.5,552.4 462.4,553.6 473.1,567.4 483.2,586.4 493.9,596.6 504.8,607.5 515.0,613.9 526.0,608.3 536.1,602.5 546.8,598.1 557.5,605.0 567.9,611.9 578.6,619.5 588.9,629.7 600.3,634.2 610.0,636.3 620.7,639.8 632.1,633.0 642.3,616.4 652.5,610.1 663.1,610.9 674.1,619.0 684.2,621.5 694.9,626.1 705.3,624.1 716.0,613.4 727.0,598.1 737.6,582.6 747.8,580.1 758.7,591.0 768.9,610.9 779.6,626.1 790.5,636.8 801.2,638.8 811.9,638.8 822.1,636.3 833.0,635.0 843.2,631.7 853.3,625.3 864.8,613.1 875.3,607.5 885.2,611.5 895.7,591.7 906.8,577.3 917.3,558.9 927.8,551.5 938.3,547.1 948.8,545.0 959.9,548.9 970.4,562.8 980.9,579.9 991.4,603.6 1001.4,623.3 1012.4,616.7 1022.9,597.0 1033.4,570.7 1043.9,562.3 1055.2,568.1 1065.0,574.1" fill="none" stroke="#1a1a1a" stroke-width="1.1"/>
 <!-- outer frame -->
 <path d="M1093.5,686.5 H4.5 V94.5 H1175.5 V686.5 H1114.5" fill="none" stroke="#111" stroke-width="1.2"/>
 <!-- navigator -->
 <rect x="16" y="687" width="1078" height="34" fill="#fbfbfb"/>
 <polygon points="17,721 17.0,717.8 60.0,717.8 75.0,718.6 126.0,719.3 182.0,719.3 237.0,719.8 260.0,719.5 292.0,719.8 347.0,719.6 380.0,719.2 402.0,718.8 457.0,717.4 513.0,716.2 540.0,715.5 560.0,716.0 568.6,714.7 584.6,713.0 592.0,714.7 596.9,713.0 606.7,714.7 616.5,713.0 641.0,713.0 658.3,712.3 678.0,708.6 687.8,706.9 707.4,708.1 713.6,709.8 719.7,710.5 729.5,708.6 735.7,706.6 741.8,708.1 756.6,707.3 768.8,705.6 777.4,701.7 781.1,703.7 795.9,703.2 803.2,701.2 813.1,701.7 827.8,698.7 843.7,698.9 849.5,700.0 862.0,695.9 878.0,694.3 885.0,690.4 890.6,690.4 896.4,693.6 901.0,691.3 909.0,694.3 914.7,691.3 930.7,693.6 935.3,695.0 949.0,693.6 957.0,690.9 967.3,693.2 976.5,693.2 990.0,694.3 1006.0,701.2 1015.4,698.9 1031.4,701.2 1042.8,699.6 1065.7,700.0 1084.0,702.3 1089.7,702.8 1093,703 1093,721" fill="#eef5fc"/>
 <polyline points="17.0,717.8 60.0,717.8 75.0,718.6 126.0,719.3 182.0,719.3 237.0,719.8 260.0,719.5 292.0,719.8 347.0,719.6 380.0,719.2 402.0,718.8 457.0,717.4 513.0,716.2 540.0,715.5 560.0,716.0 568.6,714.7 584.6,713.0 592.0,714.7 596.9,713.0 606.7,714.7 616.5,713.0 641.0,713.0 658.3,712.3 678.0,708.6 687.8,706.9 707.4,708.1 713.6,709.8 719.7,710.5 729.5,708.6 735.7,706.6 741.8,708.1 756.6,707.3 768.8,705.6 777.4,701.7 781.1,703.7 795.9,703.2 803.2,701.2 813.1,701.7 827.8,698.7 843.7,698.9 849.5,700.0 862.0,695.9 878.0,694.3 885.0,690.4 890.6,690.4 896.4,693.6 901.0,691.3 909.0,694.3 914.7,691.3 930.7,693.6 935.3,695.0 949.0,693.6 957.0,690.9 967.3,693.2 976.5,693.2 990.0,694.3 1006.0,701.2 1015.4,698.9 1031.4,701.2 1042.8,699.6 1065.7,700.0 1084.0,702.3 1089.7,702.8" fill="none" stroke="#a9c9ec" stroke-width="1"/>
 <g fill="#d8d8d8">
 <rect x="17" y="687" width="1" height="34"/><rect x="72" y="687" width="1" height="34"/><rect x="126" y="687" width="1" height="34"/><rect x="182" y="687" width="1" height="34"/><rect x="237" y="687" width="1" height="34"/><rect x="292" y="687" width="1" height="34"/><rect x="348" y="687" width="1" height="34"/><rect x="402" y="687" width="1" height="34"/><rect x="458" y="687" width="1" height="34"/><rect x="514" y="687" width="1" height="34"/><rect x="569" y="687" width="1" height="34"/><rect x="623" y="687" width="1" height="34"/><rect x="678" y="687" width="1" height="34"/><rect x="728" y="687" width="1" height="34"/><rect x="784" y="687" width="1" height="34"/><rect x="844" y="687" width="1" height="34"/><rect x="909" y="687" width="1" height="34"/><rect x="975" y="687" width="1" height="34"/><rect x="1033" y="687" width="1" height="34"/>
 </g>
 <g font-family="Liberation Sans" font-size="9" fill="#d0d0d0">
 <text x="18.5" y="718">1996</text><text x="73.0" y="718">1997</text><text x="127.9" y="718">1998</text><text x="183.9" y="718">1999</text><text x="238.8" y="718">2000</text><text x="293.7" y="718">2001</text><text x="349.0" y="718">2002</text><text x="403.9" y="718">2003</text><text x="459.1" y="718">2004</text><text x="515.0" y="718">2005</text><text x="570.1" y="718">2006</text><text x="624.9" y="718">2007</text><text x="679.9" y="718">2008</text><text x="730.0" y="718">2009</text><text x="785.1" y="718">2010</text><text x="845.0" y="718">2011</text><text x="910.5" y="718">2012</text><text x="976.8" y="718">2013</text><text x="1034.7" y="718">2014</text>
 </g>
 <rect x="1098" y="699" width="16" height="22" fill="#cfe3f6"/>
 <polyline points="1098,702 1102,700 1106,700.5 1110,702 1114,702.5" fill="none" stroke="#3a7fd0" stroke-width="1.3"/>
 <text x="1100" y="718" font-family="Liberation Sans" font-size="9.5" fill="#9a9a9a">201</text>
 <rect x="1093" y="686" width="1.2" height="35" fill="#222"/>
 <rect x="1098" y="687" width="1.2" height="34" fill="#333"/>
 <rect x="1114" y="686" width="1.2" height="35" fill="#222"/>
 <rect x="1089.5" y="694.5" width="8" height="17" fill="#dcdcd6" stroke="#aaa"/>
 <rect x="1110.5" y="694.5" width="8" height="17" fill="#dcdcd6" stroke="#aaa"/>
 <g fill="#999"><rect x="1092" y="701" width="1" height="5"/><rect x="1094" y="701" width="1" height="5"/><rect x="1113" y="701" width="1" height="5"/><rect x="1115" y="701" width="1" height="5"/></g>
 <!-- scrollbar -->
 <defs><linearGradient id="sb" x1="0" y1="0" x2="0" y2="1"><stop offset="0" stop-color="#f4f4f4"/><stop offset="1" stop-color="#dadada"/></linearGradient>
 <linearGradient id="tb" x1="0" y1="0" x2="0" y2="1"><stop offset="0" stop-color="#f7f7f7"/><stop offset="0.6" stop-color="#eaebe8"/><stop offset="1" stop-color="#d8d9d6"/></linearGradient>
 </defs>
 <rect x="5" y="721" width="1122" height="11" fill="url(#sb)"/>
 <polygon points="9,726.5 12.5,723.5 12.5,729.5" fill="#aaa"/>
 <rect x="1093.5" y="721.5" width="21" height="11" fill="#dcdcd6" stroke="#c6c6c0"/>
 <g fill="#999"><rect x="1103" y="724" width="1" height="5"/><rect x="1105" y="724" width="1" height="5"/></g>
 <polygon points="1119,723 1123,726.5 1119,730" fill="#888"/>
 <!-- bottom icons -->
 <g fill="none" stroke="#8a8a8a" stroke-width="1.6">
  <circle cx="1145" cy="725.5" r="4"/><circle cx="1171" cy="725.5" r="4"/>
  <path d="M1142,729 L1139,732"/><path d="M1168,729 L1165,732"/>
  <path d="M1154,726 A4,4 0 0 1 1161.5,724.5"/><path d="M1162,728 A4,4 0 0 1 1154.5,729.5"/>
 </g>
 <g fill="#8a8a8a"><rect x="1143" y="725" width="4" height="1.2"/><rect x="1170" y="723" width="2" height="5"/><rect x="1169" y="724.5" width="5" height="2"/>
  <polygon points="1130,722 1164,722 1164,722"/><polygon points="1152,724 1155,727.5 1151,728"/><polygon points="1164,728 1161,724.5 1165,724"/><polygon points="1129,723 1137,723 1133,727"/><polygon points="1129,726 1137,726 1133,730"/></g>
 <!-- bottom strip -->
 <rect x="5" y="732" width="1122" height="1" fill="#ebebea"/>
 <rect x="0" y="735" width="1180" height="2" fill="#c5d3e2"/>
 <rect x="0" y="735" width="1180" height="1" fill="#7f93aa"/>
 <g fill="none" stroke="#444" stroke-width="1"><path d="M87.5,737 V735.5 H121.5 V737"/><path d="M125.5,737 V735.5 H159.5 V737"/><path d="M162.5,737 V735.5 H193.5 V737"/></g>
</svg>


<!-- label boxes -->
<div class="a box" style="left:10px;top:97px;width:75px;height:18px"></div>
<div class="a lbl" style="left:14px;top:99.5px;font-weight:normal;color:#222;font-size:10px;letter-spacing:0.5px;-webkit-text-stroke:0.3px #222">MM</div>
<div class="a lbl" style="left:36.5px;top:100px;font-weight:normal;color:#5aa02c;font-size:10px;top:99.5px">7</div>
<div class="a lbl" style="left:46.5px;top:99.5px;font-weight:normal;color:#7a7a7a;font-size:10px;letter-spacing:0.3px">20</div>
<div class="a lbl" style="left:63px;top:99.5px;font-weight:normal;color:#d81e2a;font-size:10px;letter-spacing:0.3px">150</div>
<div class="a box" style="left:102px;top:97px;width:77px;height:18px"></div>
<div class="a lbl" style="left:105.5px;top:99.5px;font-weight:normal;color:#222;font-size:10px;letter-spacing:0.6px;-webkit-text-stroke:0.3px #222">BOLL</div>
<div class="a lbl" style="left:137px;top:99.5px;font-weight:normal;color:#e0702a;font-size:10px;letter-spacing:0.3px">20</div>
<div class="a lbl" style="left:153px;top:99.5px;font-weight:normal;color:#e0702a;font-size:10px;letter-spacing:0.3px">2.00</div>
<div class="a" style="left:12px;top:397.5px;font-size:8.8px;color:#2a2438;letter-spacing:0.6px;word-spacing:1.2px;-webkit-text-stroke:0.25px #2a2438">Valeur à titre indicatif</div>
<div class="a box" style="left:6px;top:419px;width:43px;height:19px"></div>
<div class="a lbl" style="left:10.5px;top:423.5px;font-weight:normal;color:#222;font-size:9px;-webkit-text-stroke:0.2px #222">RSI&nbsp; 14</div>
<div class="a box" style="left:6px;top:538px;width:77px;height:19px"></div>
<div class="a lbl" style="left:10.5px;top:542.5px;font-weight:normal;color:#222;font-size:9.2px;letter-spacing:0.7px;-webkit-text-stroke:0.25px #222">STOCH</div>
<div class="a lbl" style="left:50.5px;top:542px;font-weight:normal;color:#222;font-size:9.4px">5</div>
<div class="a lbl" style="left:61.5px;top:542px;font-weight:normal;color:#222;font-size:9.4px">3</div>
<div class="a lbl" style="left:72.3px;top:542px;font-weight:normal;color:#f03030;font-size:9.4px">3</div>

<!-- axis -->
<div class="a ax" style="top:101px">1320.00</div>
<div class="a ax" style="top:133px">1300.00</div>
<div class="a ax" style="top:166px">1280.00</div>
<div class="a ax" style="top:198px">1260.00</div>
<div class="a ax" style="top:231px">1240.00</div>
<div class="a ax" style="top:263px">1220.00</div>
<div class="a ax" style="top:296px">1200.00</div>
<div class="a ax" style="top:328px">1180.00</div>
<div class="a ax" style="top:360px">1160.00</div>
<div class="a ax" style="top:393px">1140.00</div>
<div class="a" style="left:1118px;top:275px;width:56px;height:16px;border:1px solid #222;background:#fff;font-size:11.6px;color:#111;padding-left:3px;line-height:14px">1211.62</div>
<div class="a ax" style="top:415px">100</div>
<div class="a ax" style="top:436px">80</div>
<div class="a ax" style="top:457px">60</div>
<div class="a ax" style="top:479px">40</div>
<div class="a ax" style="top:500px">20</div>
<div class="a ax" style="top:522px">0</div>
<div class="a ax" style="top:533px">100</div>
<div class="a ax" style="top:555px">80</div>
<div class="a ax" style="top:577px">60</div>
<div class="a ax" style="top:599px">40</div>
<div class="a ax" style="top:620px">20</div>
<div class="a ax" style="top:642px">0</div>
<div class="a" style="left:258.5px;top:650.5px;font-size:8.5px;color:#a6a6a6;font-weight:bold;letter-spacing:0.5px">2015</div>
<div class="a" style="left:1004px;top:650px;font-size:9.5px;color:#333">Avr</div>

<!-- bottom bar -->
<div class="a bt" style="left:9px;color:#222">03-12-2014</div>
<div class="a" style="left:69px;top:672px;width:11px;height:11px;border:1.5px solid #9a9a9a;background:#e8e8e8"><div class="a" style="left:2px;top:2px;width:4px;height:4px;background:#aaa"></div></div>
<div class="a bt" style="left:94px;color:#222">-</div>
<div class="a bt" style="left:105px;color:#222">08-04-2015</div>
<div class="a" style="left:166px;top:672px;width:11px;height:11px;border:1.5px solid #9a9a9a;background:#e8e8e8"><div class="a" style="left:2px;top:2px;width:4px;height:4px;background:#aaa"></div></div>
<div class="a bt" style="left:187px;color:#888">H: 1307.62</div>
<div class="a bt" style="left:242px;color:#888">B: 1142.89</div>
<div class="a bt" style="left:296px;color:#1aa01a;font-weight:bold">11.92</div>
<div class="a bt" style="left:327px;color:#1aa01a;font-weight:bold">0.99%</div>
<div class="a bt" style="left:361px;color:#57524d;font-weight:bold;font-size:10px;letter-spacing:-0.35px;top:672.5px">Aujourd'hui :</div>
<div class="a bt" style="left:421px;color:#888">H: 1212.74</div>
<div class="a bt" style="left:474px;color:#888">B: 1207.69</div>
<div class="a bt" style="left:527px;color:#1aa01a;font-weight:bold">2.37</div>
<div class="a bt" style="left:551px;color:#1aa01a;font-weight:bold">0.2%</div>
</body></html>
